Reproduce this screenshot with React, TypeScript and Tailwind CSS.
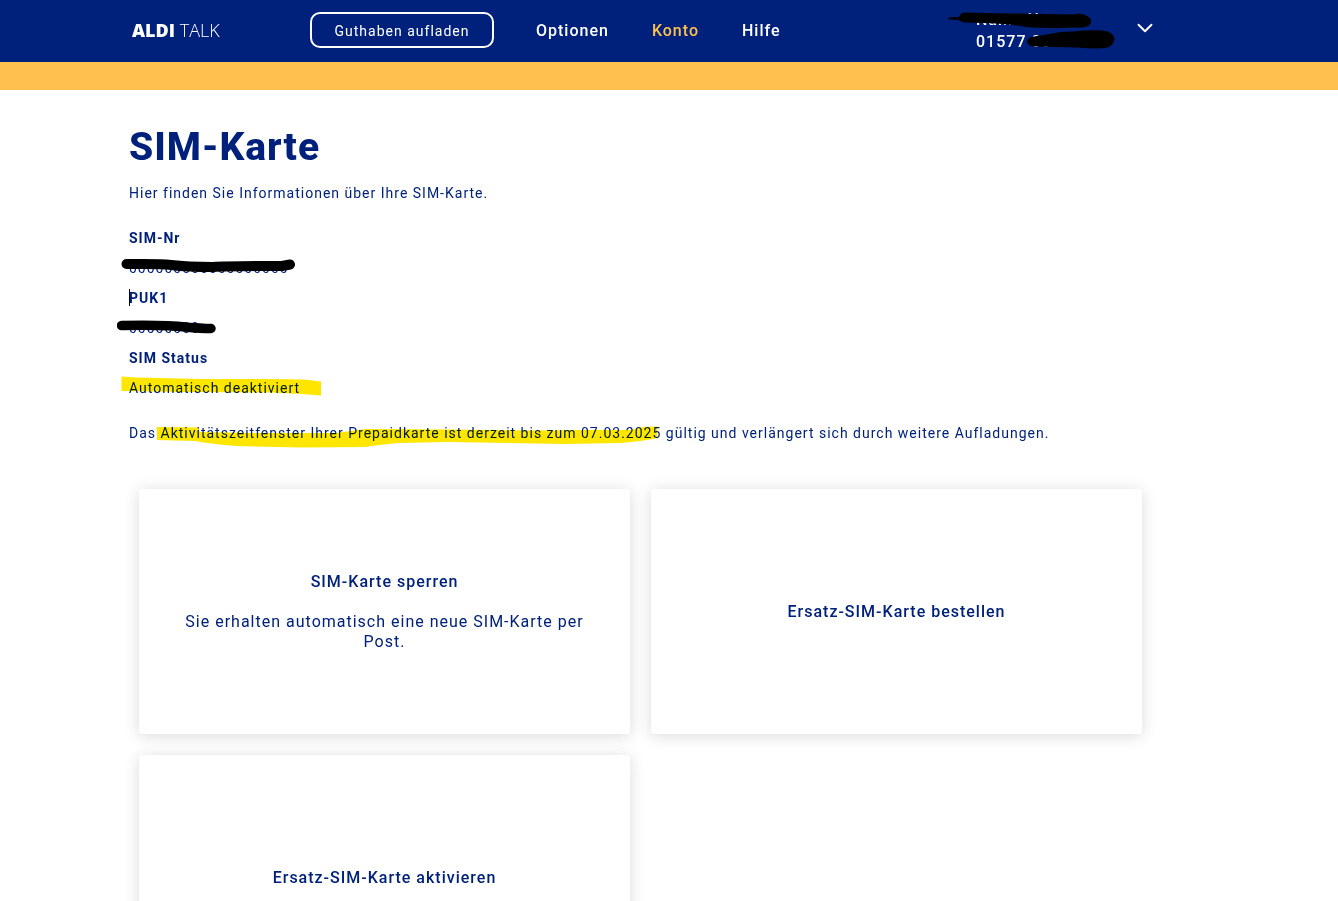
import { ChevronDown } from "lucide-react";

const navItems = [
  { label: "Optionen", active: false },
  { label: "Konto", active: true },
  { label: "Hilfe", active: false },
];

const simDetails = [
  { label: "SIM-Nr", value: "000000000000000000", mark: "sim" },
  { label: "PUK1", value: "00000000", mark: "puk" },
  { label: "SIM Status", value: "Automatisch deaktiviert", mark: "status" },
];

const cards = [
  {
    title: "SIM-Karte sperren",
    text: "Sie erhalten automatisch eine neue SIM-Karte per Post.",
  },
  { title: "Ersatz-SIM-Karte bestellen" },
  { title: "Ersatz-SIM-Karte aktivieren" },
];

// Hand-drawn strokes that lie over the text
function Mark({ type }: { type: string }) {
  if (type === "sim") {
    return (
      <svg className="absolute -left-2 top-0 h-[30px] w-[180px]" viewBox="0 0 180 30" fill="none">
        <path
          d="M5.5 11C22 11 39 10.500 50 12C62 13.500 76 14 92 14C106 13 125 13 161 13L169 11.500"
          stroke="#000"
          strokeWidth="10"
          strokeLinecap="round"
          strokeLinejoin="round"
        />
      </svg>
    );
  }
  if (type === "puk") {
    return (
      <svg className="absolute -left-3 top-0 h-[30px] w-[110px]" viewBox="0 0 110 30" fill="none">
        <path
          d="M4.500 12.500C30 12 56 12.500 68 14C79 15 88 15.500 94 15.500"
          stroke="#000"
          strokeWidth="9.500"
          strokeLinecap="round"
        />
      </svg>
    );
  }
  return (
    <svg
      className="absolute -left-2 top-0 h-[30px] w-[205px] mix-blend-multiply"
      viewBox="0 0 205 30"
    >
      <path
        d="M.5 3.500L15 4.500L80 6L150 6L183 6.500L200 8.500V22.500L180 21L150 19.500L65 19L.5 18Z"
        fill="#ffe600"
      />
    </svg>
  );
}

function Header() {
  return (
    <header className="border-b-[28px] border-[#ffc14d] bg-[#00217b] text-white">
      <div className="mx-auto flex h-[62px] max-w-[1080px] items-center">
        <a
          href="#"
          aria-label="ALDI TALK"
          className="w-[181px] pb-0.5 pl-[3px] font-['Open_Sans',sans-serif] text-lg tracking-normal"
        >
          <span className="font-extrabold">ALDI</span> <span className="font-light">TALK</span>
        </a>
        <button
          type="button"
          className="mb-0.5 h-9 w-[184px] rounded-[10px] border-2 border-white pt-px text-sm"
        >
          Guthaben aufladen
        </button>
        <nav className="ml-[42px] flex flex-1 gap-[43px] font-medium">
          {navItems.map((item) => (
            <a key={item.label} href="#" className={item.active ? "text-[#ffc14d]" : ""}>
              {item.label}
            </a>
          ))}
        </nav>
        <button
          type="button"
          aria-label="Konto wechseln"
          className="mr-[51px] flex items-start text-left font-medium"
        >
          <span className="relative block w-[156px] leading-[22px]">
            <span className="block">Name Name</span>
            <span className="block">01577 0000</span>
            <svg
              className="absolute -left-7 -top-[3px] h-[52px] w-[172px]"
              viewBox="0 0 172 52"
              fill="#000"
            >
              <path d="M0 11.500L11 11Q12 7 17 6.500L60 7.500L125 8.500Q135 6.500 138 9.500Q144 12 143 17Q141 21 134 21.500Q100 22.500 77 21Q60 17 17 16.500Q13 16 11 14L1 13.500Z" />
              <path d="M79 35.500Q80 31 86 30.500L102 28Q110 25.500 125 25.500Q145 23.500 158 25Q166 27 166.500 33.500Q165 41 157 42Q145 43 130 41.500L86 40.500Q80 40 79 35.500Z" />
            </svg>
          </span>
          <ChevronDown className="mt-1.5 size-[26px]" strokeWidth={1.75} />
        </button>
      </div>
    </header>
  );
}

export default function App() {
  return (
    <div className="min-h-screen bg-white font-[Roboto,sans-serif] text-base tracking-[1px] text-[#00217b]">
      <Header />
      <main className="mx-auto max-w-[1080px]">
        <div className="max-w-[1023px] pt-8 pb-10">
          <h1 className="text-[39px] leading-[50px] font-extrabold">SIM-Karte</h1>
          <p className="mt-1.5 text-sm leading-[30px]">
            Hier finden Sie Informationen über Ihre SIM-Karte.
          </p>

          <dl className="mt-[15px] text-sm leading-[30px]">
            {simDetails.map((d) => (
              <div key={d.label}>
                <dt className="relative font-bold">
                  {d.mark === "puk" && (
                    <span className="absolute left-0 top-1.5 h-[17px] w-px bg-black" />
                  )}
                  {d.label}
                </dt>
                <dd className="relative">
                  {d.value}
                  <Mark type={d.mark} />
                </dd>
              </div>
            ))}
          </dl>

          <p className="mt-[15px] text-sm leading-[30px]">
            Das{" "}
            <span className="relative inline-block">
              Aktivitätszeitfenster Ihrer Prepaidkarte ist derzeit bis zum 07.03.2025
              <svg
                className="absolute -left-1 top-0 h-[30px] w-full mix-blend-multiply"
                viewBox="0 0 518 30"
                preserveAspectRatio="none"
              >
                <path
                  d="M0 9L43 9.500L44 14L105 15L185 15L216 11L300 11.500L390 12.500L446 12L490 12L503 9L518 8.500V20L500 23L480 25L420 26L300 24L250 25Q228 27 215 29L150 29.500L82 28Q55 26 40 23L0 22Z"
                  fill="#ffe600"
                />
              </svg>
            </span>{" "}
            gültig und verlängert sich durch weitere Aufladungen.
          </p>

          <div className="mt-[41px] grid grid-cols-2 gap-[21px] px-2.5">
            {cards.map((card) => (
              <a
                key={card.title}
                href="#"
                className="flex min-h-[245px] flex-col items-center justify-center gap-5 rounded-[3px] bg-white px-9 text-center leading-5 shadow-[0_2px_16px_rgba(0,0,0,0.15)]"
              >
                <span className="font-medium">{card.title}</span>
                {card.text && <span>{card.text}</span>}
              </a>
            ))}
          </div>
        </div>
      </main>
    </div>
  );
}
